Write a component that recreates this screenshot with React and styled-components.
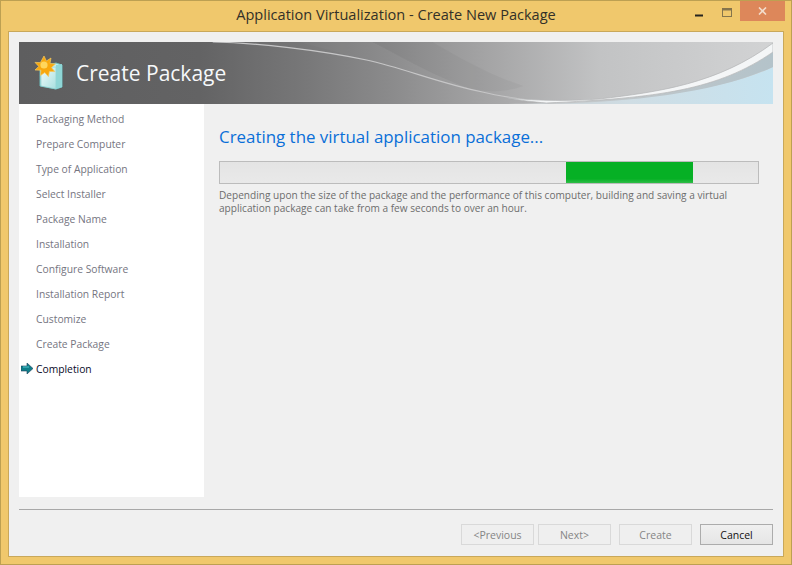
import React from 'react';
import styled, { createGlobalStyle } from 'styled-components';

const steps = [
  'Packaging Method',
  'Prepare Computer',
  'Type of Application',
  'Select Installer',
  'Package Name',
  'Installation',
  'Configure Software',
  'Installation Report',
  'Customize',
  'Create Package',
  'Completion',
];

const GlobalStyle = createGlobalStyle`
  html, body {
    margin: 0;
    padding: 0;
    background: #f0c86c;
  }
`;

const Frame = styled.div`
  position: relative;
  box-sizing: border-box;
  width: 792px;
  height: 565px;
  padding: 0 7px 7px;
  display: flex;
  flex-direction: column;
  background: #f0c86c;
  border: 1px solid #bda052;
  font-family: "Open Sans", "Liberation Sans", sans-serif;
`;

const TitleBar = styled.div`
  height: 30px;
  flex: none;
  text-align: center;
  font-size: 14.55px;
  line-height: 27px;
  color: #333028;
`;

const WindowControls = styled.div`
  position: absolute;
  top: 0;
  right: 6px;
  height: 21px;
  display: flex;
`;

const ControlButton = styled.div`
  width: ${p => p.$wide ? '45px' : '27px'};
  height: 20px;
  display: flex;
  align-items: center;
  justify-content: center;
  padding-top: ${p => p.$drop || 0}px;
  box-sizing: border-box;
  background: ${p => p.$wide ? '#dd875a' : 'transparent'};
`;

const Client = styled.div`
  flex: 1;
  display: flex;
  flex-direction: column;
  padding: 10px 10px 11px;
  background: #f0f0f0;
  border: 1px solid #c9a85a;
`;

const Banner = styled.div`
  position: relative;
  flex: none;
  height: 62px;
  display: flex;
  align-items: center;
  gap: 12px;
  padding-left: 15px;
  background: #5e5e5f;
  overflow: hidden;
`;

const BannerArt = styled.svg`
  position: absolute;
  inset: 0;
  width: 100%;
  height: 100%;
`;

const BannerIcon = styled.svg`
  position: relative;
  flex: none;
`;

const BannerTitle = styled.div`
  position: relative;
  font-size: 21px;
  line-height: 62px;
  color: #f6f8fa;
`;

const Middle = styled.div`
  flex: 1;
  display: flex;
  min-height: 0;
`;

const Sidebar = styled.ul`
  flex: none;
  width: 185px;
  margin: 0;
  padding: 2px 0 0;
  list-style: none;
  background: #ffffff;
`;

const Step = styled.li`
  height: 25px;
  display: flex;
  align-items: center;
  padding-left: 2px;
  font-size: 10.3px;
  color: ${p => p.$current ? '#0a0a28' : '#75757f'};
`;

const ArrowSlot = styled.span`
  flex: none;
  width: 15px;
  display: flex;
  align-items: center;
`;

const Content = styled.div`
  flex: 1;
  padding: 21px 15px 0;
`;

const Heading = styled.h1`
  margin: 0;
  font-size: 16.9px;
  font-weight: 400;
  line-height: 24px;
  color: #0a6fd8;
`;

const ProgressTrack = styled.div`
  box-sizing: border-box;
  width: 540px;
  height: 23px;
  margin-top: 12px;
  padding-left: 346px;
  background: linear-gradient(to bottom, #e4e4e4, #e9e9e9);
  border: 1px solid #bcbcbc;
`;

const ProgressFill = styled.div`
  width: 127px;
  height: 100%;
  background: linear-gradient(to bottom, #06b025 0 80%, #2fbd48 100%);
`;

const Description = styled.p`
  margin: 5px 0 0;
  width: 530px;
  font-size: 10.1px;
  line-height: 13px;
  color: #6d6d6d;
`;

const Footer = styled.div`
  flex: none;
  margin-top: 12px;
  padding-top: 14px;
  border-top: 1px solid #a8a8a8;
  display: flex;
  justify-content: flex-end;
`;

const Button = styled.div`
  box-sizing: border-box;
  width: 73px;
  height: 21px;
  margin-left: ${p => p.$gap || 4}px;
  display: flex;
  align-items: center;
  justify-content: center;
  font-size: 10.5px;
  color: ${p => p.disabled ? '#858585' : '#111111'};
  border: 1px solid ${p => p.disabled ? '#d9d9d9' : '#acacac'};
  background: ${p => p.disabled ? '#efefef' : 'linear-gradient(to bottom, #f0f0f0, #e5e5e5)'};
`;

const CurrentArrow = () => (
  <svg width="13" height="11" viewBox="0 0 13 11">
    <path d="M0 3h6V0l6 5.5-6 5.5V8H0z" fill="#0f7f8a" stroke="#23405a" strokeWidth="0.6" />
    <path d="M2 4h6" stroke="#55c8d0" strokeWidth="1" />
  </svg>
);

const PackageIcon = () => (
  <BannerIcon width="30" height="34" viewBox="0 0 30 34">
    <defs>
      <linearGradient id="boxFront" x1="0" y1="0" x2="1" y2="1">
        <stop offset="0" stopColor="#f2fbfb" />
        <stop offset="1" stopColor="#a8e0e0" />
      </linearGradient>
    </defs>
    <path d="M6 11l16-4 6 2v22l-6 2-16-3z" fill="#c4eeee" stroke="#6dbcbc" strokeWidth="1" />
    <path d="M7 12l15-1v22l-15-3z" fill="url(#boxFront)" stroke="#8ccccc" strokeWidth="0.6" />
    <path d="M22 9l6-1v23l-6 2z" fill="#8fd6d6" />
    <path
      d="M10 0l2.4 5 4.6-3-1 5.4 5.4.6-4 3.6 3.4 4-5.4-.2-1 5.2-3.6-4-4.4 3 .6-5.4L1 14l3.8-3.6L1 6.4l5.4.2z"
      fill="#f8a80e"
      stroke="#f4c860"
      strokeWidth="0.7"
    />
    <circle cx="10" cy="9" r="3.6" fill="#ffd65c" />
  </BannerIcon>
);

const BannerArtwork = () => (
  <BannerArt viewBox="0 0 755 62" preserveAspectRatio="none">
    <defs>
      <linearGradient id="greyWash" x1="0" y1="0" x2="1" y2="0">
        <stop offset="0" stopColor="#5e5e5f" />
        <stop offset="0.24" stopColor="#636364" />
        <stop offset="0.37" stopColor="#767677" />
        <stop offset="0.5" stopColor="#8c8c8d" />
        <stop offset="0.64" stopColor="#a8a8a9" />
        <stop offset="0.77" stopColor="#c2c3c4" />
        <stop offset="1" stopColor="#d2d3d4" />
      </linearGradient>
      <linearGradient id="blueWash" x1="0" y1="0" x2="1" y2="0">
        <stop offset="0" stopColor="#c8c9ca" />
        <stop offset="0.5" stopColor="#cfdde4" />
        <stop offset="1" stopColor="#c6e3f0" />
      </linearGradient>
      <linearGradient id="shadowBand" x1="0" y1="0" x2="1" y2="0">
        <stop offset="0" stopColor="#c6c8c9" />
        <stop offset="1" stopColor="#b4c3ca" />
      </linearGradient>
    </defs>
    <rect width="755" height="62" fill="url(#greyWash)" />
    {/* faint folds around the thin curve */}
    <path d="M354 0C385 16 415 34 455 48C420 38 385 26 340 16L280 0Z" fill="#ffffff" opacity="0.025" />
    <path d="M354 0C385 16 415 34 455 48C470 50 490 50 505 44C470 32 445 18 414 0Z" fill="#000000" opacity="0.03" />
    <path d="M194 0C240 1 300 8 348 18C385 26 420 41 464 50C480 54 495 56 510 58" fill="none" stroke="#c6c6c7" strokeWidth="1.2" />
    <path d="M470 62C560 62 690 56 755 25V62Z" fill="url(#blueWash)" />
    <path d="M528 61C640 56 700 48 755 10V25C700 50 620 60 530 62Z" fill="url(#shadowBand)" />
    <path
      d="M490 56C520 59 555 59 581 57C640 50 700 42 755 1V10C700 48 640 56 528 61C515 60 500 58 490 56Z"
      fill="#f4f6f7"
      stroke="#b3b5b6"
      strokeWidth="0.7"
    />
  </BannerArt>
);

export default function App() {
  return (
    <>
      <GlobalStyle />
      <Frame>
        <TitleBar>Application Virtualization - Create New Package</TitleBar>
        <WindowControls>
          <ControlButton $drop={8}>
            <svg width="9" height="3" viewBox="0 0 9 3">
              <rect y="0.5" width="8" height="2" fill="#26241e" />
            </svg>
          </ControlButton>
          <ControlButton $drop={2}>
            <svg width="10" height="9" viewBox="0 0 10 9">
              <rect x="0.5" y="0.5" width="9" height="8" fill="none" stroke="#85754c" />
              <rect x="0.5" y="0.5" width="9" height="2" fill="#85754c" />
            </svg>
          </ControlButton>
          <ControlButton $wide>
            <svg width="9" height="8" viewBox="0 0 9 8">
              <path d="M1 0.5l7 7M8 0.5l-7 7" stroke="#f3dccb" strokeWidth="1.6" />
            </svg>
          </ControlButton>
        </WindowControls>
        <Client>
          <Banner>
            <BannerArtwork />
            <PackageIcon />
            <BannerTitle>Create Package</BannerTitle>
          </Banner>
          <Middle>
            <Sidebar>
              {steps.map(step => (
                <Step key={step} $current={step === 'Completion'}>
                  <ArrowSlot>{step === 'Completion' && <CurrentArrow />}</ArrowSlot>
                  {step}
                </Step>
              ))}
            </Sidebar>
            <Content>
              <Heading>Creating the virtual application package...</Heading>
              <ProgressTrack>
                <ProgressFill />
              </ProgressTrack>
              <Description>
                Depending upon the size of the package and the performance of this computer, building and saving a virtual application package can take from a few seconds to over an hour.
              </Description>
            </Content>
          </Middle>
          <Footer>
            <Button disabled>&lt;Previous</Button>
            <Button disabled>Next&gt;</Button>
            <Button disabled $gap={8}>Create</Button>
            <Button $gap={8}>Cancel</Button>
          </Footer>
        </Client>
      </Frame>
    </>
  );
}
